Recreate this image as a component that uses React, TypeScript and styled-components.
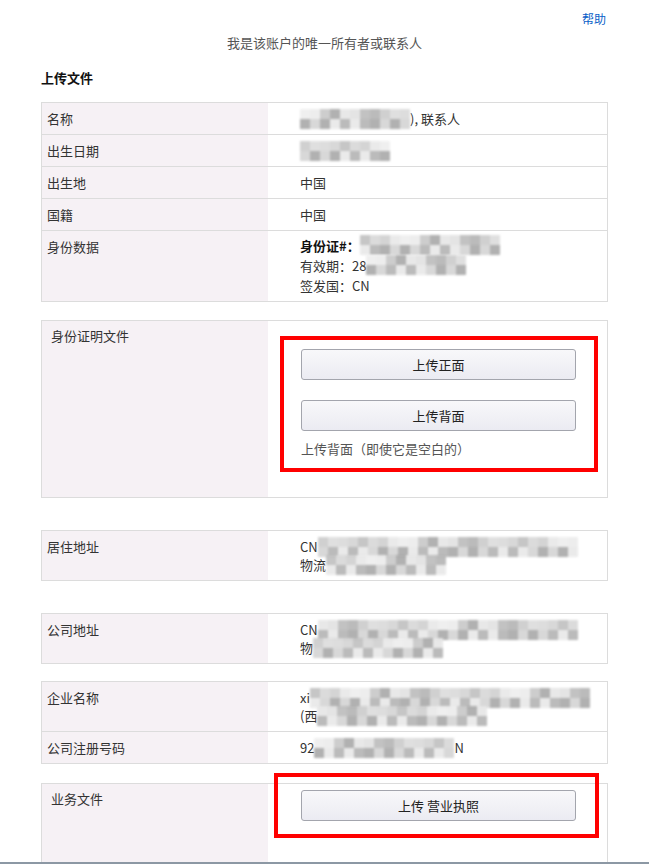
import styled, { createGlobalStyle } from 'styled-components';

const GlobalStyle = createGlobalStyle`
  html, body {
    margin: 0;
    padding: 0;
    background: #fff;
  }
  body {
    font-family: "Noto Sans CJK SC", "Liberation Sans", sans-serif;
    font-size: 13px;
    color: #333;
  }
`;

// pixelated blur that hides personal data
const greys = [0xe6, 0xd4, 0xc8, 0xdc, 0xee, 0xb4, 0xd0, 0xe2, 0xc0, 0xa9, 0xda, 0xec, 0xcc, 0xe8, 0xbc, 0xd8];

function Mosaic({ cols, seed = 0, rows = 2 }: { cols: number; seed?: number; rows?: number }) {
  const cells = [];
  for (let r = 0; r < rows; r++) {
    for (let c = 0; c < cols; c++) {
      const g = greys[(c * 7 + r * 5 + seed * 3 + ((c * r + seed) % 4)) % greys.length];
      const hex = g.toString(16);
      cells.push(<MosaicCell key={`${r}-${c}`} style={{ background: `#${hex}${hex}${hex}` }} />);
    }
  }
  return (
    <MosaicGrid $cols={cols} $rows={rows}>
      {cells}
    </MosaicGrid>
  );
}

function App() {
  return (
    <>
      <GlobalStyle />
      <Page>
        <HelpBar>
          <a href="#">帮助</a>
        </HelpBar>
        <Subtitle>我是该账户的唯一所有者或联系人</Subtitle>
        <Heading>上传文件</Heading>

        <Panel>
          <Row>
            <Label>名称</Label>
            <Value>
              <Mosaic cols={11} seed={1} />
              ), 联系人
            </Value>
          </Row>
          <Row>
            <Label>出生日期</Label>
            <Value>
              <Mosaic cols={9} seed={4} />
            </Value>
          </Row>
          <Row>
            <Label>出生地</Label>
            <Value>中国</Value>
          </Row>
          <Row>
            <Label>国籍</Label>
            <Value>中国</Value>
          </Row>
          <Row>
            <Label>身份数据</Label>
            <Value $compact>
              <Line $lh={20}>
                <b>身份证#：</b>
                <Mosaic cols={14} seed={2} />
              </Line>
              <Line $lh={20}>
                有效期：28
                <Mosaic cols={10} seed={6} />
              </Line>
              <Line $lh={20}>签发国：CN</Line>
            </Value>
          </Row>
        </Panel>

        <Panel $gap={18}>
          <Row>
            <DocLabel>身份证明文件</DocLabel>
            <DocValue>
              <Marked>
                <UploadButton>上传正面</UploadButton>
                <UploadButton>上传背面</UploadButton>
                <Note>上传背面（即使它是空白的）</Note>
              </Marked>
            </DocValue>
          </Row>
        </Panel>

        <Panel $gap={32}>
          <Row>
            <Label>居住地址</Label>
            <Value>
              <Line>
                CN
                <Mosaic cols={26} seed={3} />
              </Line>
              <Line>
                物流
                <Mosaic cols={12} seed={8} />
              </Line>
            </Value>
          </Row>
        </Panel>

        <Panel $gap={32}>
          <Row>
            <Label>公司地址</Label>
            <Value>
              <Line>
                CN
                <Mosaic cols={26} seed={5} />
              </Line>
              <Line>
                物
                <Mosaic cols={13} seed={9} />
              </Line>
            </Value>
          </Row>
        </Panel>

        <Panel $gap={17}>
          <Row>
            <Label>企业名称</Label>
            <Value>
              <Line>
                xi
                <Mosaic cols={28} seed={7} />
              </Line>
              <Line>
                (西
                <Mosaic cols={17} seed={10} />
              </Line>
            </Value>
          </Row>
          <Row>
            <Label>公司注册号码</Label>
            <Value>
              92
              <Mosaic cols={14} seed={11} />N
            </Value>
          </Row>
        </Panel>

        <Panel $gap={19}>
          <Row>
            <DocLabel>业务文件</DocLabel>
            <BizValue>
              <Framed>
                <UploadButton>上传 营业执照</UploadButton>
              </Framed>
            </BizValue>
          </Row>
        </Panel>
      </Page>
      <BottomEdge />
    </>
  );
}

const Page = styled.div`
  width: 567px;
  margin: 0 auto;
  padding-bottom: 40px;
`;

const HelpBar = styled.div`
  display: flex;
  justify-content: flex-end;
  padding: 11px 2px 0 0;
  height: 17px;
  a {
    font-size: 12px;
    line-height: 16px;
    color: #0a5fc8;
    text-decoration: none;
  }
`;

const Subtitle = styled.div`
  margin-top: 6px;
  line-height: 18px;
  text-align: center;
  color: #555;
`;

const Heading = styled.h3`
  margin: 17px 0 0;
  font-size: 13px;
  line-height: 18px;
  font-weight: bold;
  color: #111;
`;

const Panel = styled.div<{ $gap?: number }>`
  margin-top: ${(p) => p.$gap ?? 15}px;
  border: 1px solid #dcdcdc;
`;

const Row = styled.div`
  display: grid;
  grid-template-columns: 226px 1fr;
  & + & {
    border-top: 1px solid #dcdcdc;
  }
`;

const Label = styled.div`
  background: #f6f1f5;
  padding: 7px 5px 6px;
  line-height: 18px;
  color: #333;
`;

const Value = styled.div<{ $compact?: boolean }>`
  padding: ${(p) => (p.$compact ? '5px 10px 5px 32px' : '7px 10px 6px 32px')};
  line-height: 18px;
  color: #333;
  b {
    color: #111;
  }
`;

const Line = styled.div<{ $lh?: number }>`
  white-space: nowrap;
  line-height: ${(p) => p.$lh ?? 18}px;
`;

const MosaicGrid = styled.span<{ $cols: number; $rows: number }>`
  display: inline-grid;
  grid-template-columns: repeat(${(p) => p.$cols}, 10px);
  grid-auto-rows: 10px;
  vertical-align: top;
  margin: -1px 0;
  filter: blur(1px);
  opacity: 0.9;
`;

const MosaicCell = styled.span`
  display: block;
`;

const DocLabel = styled.div`
  background: #f6f1f5;
  padding: 6px 9px;
  line-height: 18px;
  color: #333;
`;

const DocValue = styled.div`
  padding: 15px 9px 25px 12px;
`;

const Marked = styled.div`
  border: 4px solid #ff0000;
  padding: 9px 18px 10px 17px;
  display: flex;
  flex-direction: column;
  gap: 20px;
`;

const UploadButton = styled.button`
  height: 31px;
  width: 100%;
  border: 1px solid #a3a5ad;
  border-radius: 3px;
  background: linear-gradient(#f8f8fa, #ebebf2);
  font-family: inherit;
  font-size: 13px;
  color: #222;
  cursor: pointer;
`;

const Note = styled.div`
  margin-top: -11px;
  line-height: 18px;
  color: #555;
`;

const BizValue = styled.div`
  padding: 6px 31px 0 33px;
  min-height: 100px;
`;

const Framed = styled.div`
  position: relative;
  &::before {
    content: '';
    position: absolute;
    top: -17px;
    bottom: -17px;
    left: -27px;
    right: -23px;
    border: 4px solid #ff0000;
  }
`;

const BottomEdge = styled.div`
  position: fixed;
  left: 0;
  right: 0;
  bottom: 0;
  height: 2px;
  background: #8c98a4;
`;

export default App;
